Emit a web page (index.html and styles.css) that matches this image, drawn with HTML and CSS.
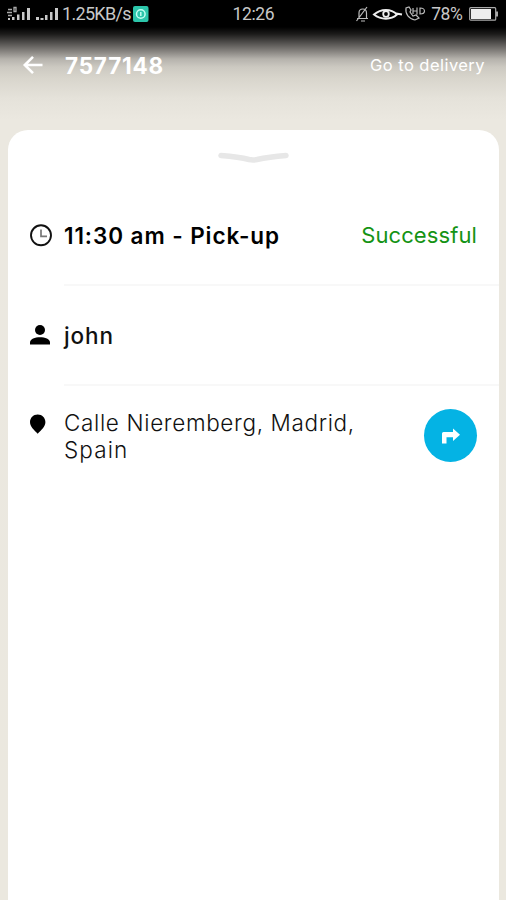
FILE: index.html
```html
<!DOCTYPE html>
<html lang="en">
<head>
<meta charset="utf-8">
<title>Delivery details</title>
<link rel="stylesheet" href="styles.css">
</head>
<body>
<div class="statusbar">
  <svg class="signals" width="54" height="18" viewBox="0 0 54 18" fill="#c9c9c9">
    <path d="M2 4.500h4M1 7.500h5M2 10.500h4M8 2.500h2v4H8z" stroke="#aaa" stroke-width="1.300" fill="none"/>
    <path d="M2 13h2v2H2zM6 12h2.500v3H6zM11 9.500h2.500V15H11zM16 7h2.500v8H16zM21 3h3v12h-3zM30 12h3v3h-3zM34.500 13h3v2h-3zM39 10h2.500v5H39zM44 7h2.500v8H44zM49 3h3v12h-3z"/>
  </svg>
  <span class="speed">1.25KB/s</span>
  <svg class="app" width="16" height="18" viewBox="0 0 16 18"><rect y="1" width="15.500" height="16" rx="2" fill="#2cc6aa"/><circle cx="7.800" cy="9" r="4.300" fill="none" stroke="#c4fff2" stroke-width="1.500"/><path d="M7.800 7v4" stroke="#c4fff2" stroke-width="1.500"/></svg>
  <span class="clock">12:26</span>
  <svg class="tray" width="72" height="18" viewBox="0 0 72 18" fill="none" stroke="#bbb" stroke-width="1.200">
    <path d="M2 13.500h11M4 13V8c0-3 1.500-4 3.800-4s3.700 1 3.700 4v5M1.500 16 12 2M6 16h4"/>
    <path d="M19 9.500c7-6 17-6 23 0-6 5.500-16 5.500-23 0zM41 8.500l6 1" stroke="#eee" stroke-width="2"/>
    <circle cx="31" cy="9" r="2.800" stroke="#eee" stroke-width="1.800"/>
    <path d="M51 3c-1 6 3 11 9 12l4-2-3-3-3 1-3-4 1-2-2-3zM58 3v6M58 6h4M62 2.500v7M65 3v6c6 0 6-6 0-6z"/>
  </svg>
  <span class="percent">78%</span>
  <svg class="battery" width="30" height="18" viewBox="0 0 30 18"><rect x=".7" y="2.700" width="26" height="12.500" rx="1" fill="none" stroke="#aaa" stroke-width="1.200"/><rect x="2" y="4" width="20" height="10" fill="#eee"/><path d="M27 6.500h2v5h-2z" fill="#aaa"/></svg>
</div>
<header class="topbar">
  <svg class="back" width="22" height="20" viewBox="0 0 22 20" fill="none" stroke="#fff" stroke-width="2.600"><path d="M20.500 10H3M11 1.800 2.800 10l8.200 8.200"/></svg>
  <h1 class="order">7577148</h1>
  <a class="go">Go to delivery</a>
</header>
<main class="sheet">
  <svg class="handle" width="72" height="12" viewBox="0 0 72 12" fill="none" stroke="#e7e7e7" stroke-width="5.500" stroke-linecap="round" stroke-linejoin="round"><path d="M4 3.500 Q22 5 32 7.500 Q36 8.300 40 7.500 Q52 4.800 69 3.500"/></svg>
  <section class="row row-time">
    <svg class="icon" width="24" height="24" viewBox="0 0 24 24" fill="none"><circle cx="11" cy="12.300" r="10" stroke="#111" stroke-width="1.900"/><path d="M11 6.500v6.800h6" stroke="#777" stroke-width="1.700"/></svg>
    <span class="time">11:30 am - Pick-up</span>
    <span class="status">Successful</span>
  </section>
  <section class="row row-name">
    <svg class="icon" width="24" height="24" viewBox="0 0 24 24"><circle cx="10" cy="7" r="5"/><path d="M0 21.500v-2c0-7 20-7 20 0v2z"/></svg>
    <span class="name">john</span>
  </section>
  <section class="row row-address">
    <svg class="icon" width="24" height="24" viewBox="0 0 24 24"><path d="M7.700 1.500c4.500 0 7.700 3.400 7.700 7.600 0 4.500-4 8-7.700 11.600C4 17.100 0 13.600 0 9.100 0 4.900 3.200 1.500 7.700 1.500z"/></svg>
    <p class="address"><span class="line1">Calle Nieremberg, Madrid,</span><br><span class="line2">Spain</span></p>
    <button class="nav" aria-label="Directions"><svg width="18" height="16" viewBox="0 0 18 16"><path d="M0 15.500V5.500Q0 4 1.500 4H11V.5l7 6.300-7 6.200V9.300H4.500v6.200z" fill="#fff"/></svg></button>
  </section>
</main>
</body>
</html>
```
FILE: styles.css
```css
* { box-sizing: border-box; }
html, body { margin: 0; height: 100%; overflow: hidden; }
body {
  display: flex;
  flex-direction: column;
  font-family: Inter, "Liberation Sans", sans-serif;
  color: #111;
  background: linear-gradient(#000 0, #000 27px, #1c1b1a 34px, #4d4b49 42px, #84817d 51px, #b5b2ac 59px, #ccc9c1 67px, #d8d5cc 78px, #e5e2da 98px, #ebe8e0 120px, #ebe8df 100%);
}
.statusbar {
  display: flex;
  align-items: center;
  height: 27px;
  flex: none;
  padding: 0 7px 0 6px;
  font-family: Roboto, sans-serif;
  font-size: 18px;
  color: #c8c8c8;
  white-space: nowrap;
}
.speed { width: 71px; margin-left: 2px; font-size: 18px; letter-spacing: -0.7px; }
.clock { margin-left: 84px; width: 50px; font-size: 17.5px; letter-spacing: -0.4px; }
.tray { margin-left: 73px; }
.percent { margin-left: 4px; width: 38px; font-size: 17.5px; letter-spacing: -0.5px; }
svg { flex: none; display: block; }
.topbar {
  display: flex;
  align-items: center;
  flex: none;
  height: 76px;
  padding: 0 21px 0 22px;
  color: #fff;
}
.order { margin: 0 0 0 21px; font-size: 22.5px; font-weight: 700; letter-spacing: 0.8px; }
.go { margin-left: auto; font-size: 16.5px; letter-spacing: 0.45px; }
.sheet {
  flex: 1;
  margin: 27px 7px 0 8px;
  border-radius: 20px 20px 0 0;
  background: #fff;
}
.handle { margin: 22px 0 0 209px; }
.row { display: flex; position: relative; padding-left: 22px; }
.icon { width: 24px; margin-right: 10px; }
.row-time { height: 122px; align-items: center; padding-top: 20px; }
.row-name { height: 100px; align-items: center; padding-bottom: 2px; }
.row-time, .row-name {
  background: linear-gradient(#f8f8f8, #f8f8f8) 56px 100% / 100% 2px no-repeat;
}
.time { font-size: 22.5px; font-weight: 600; color: #000; letter-spacing: 0.92px; white-space: nowrap; }
.status { margin-left: auto; margin-right: 22px; font-size: 22px; letter-spacing: 0.1px; color: #149314; }
.name { font-size: 22.5px; font-weight: 500; letter-spacing: 0.9px; }
.row-address { padding-top: 23px; align-items: flex-start; }
.row-address .icon { margin-top: 4px; }
.address { margin: 0; font-size: 22.5px; font-weight: 300; line-height: 27px; letter-spacing: 0.65px; white-space: nowrap; }
.line2 { letter-spacing: 1.1px; }
.nav {
  display: flex;
  align-items: center;
  justify-content: center;
  width: 53px;
  height: 53px;
  margin: 0 22px 0 auto;
  padding: 0;
  border: 0;
  border-radius: 50%;
  background: #04b3e4;
}
```
